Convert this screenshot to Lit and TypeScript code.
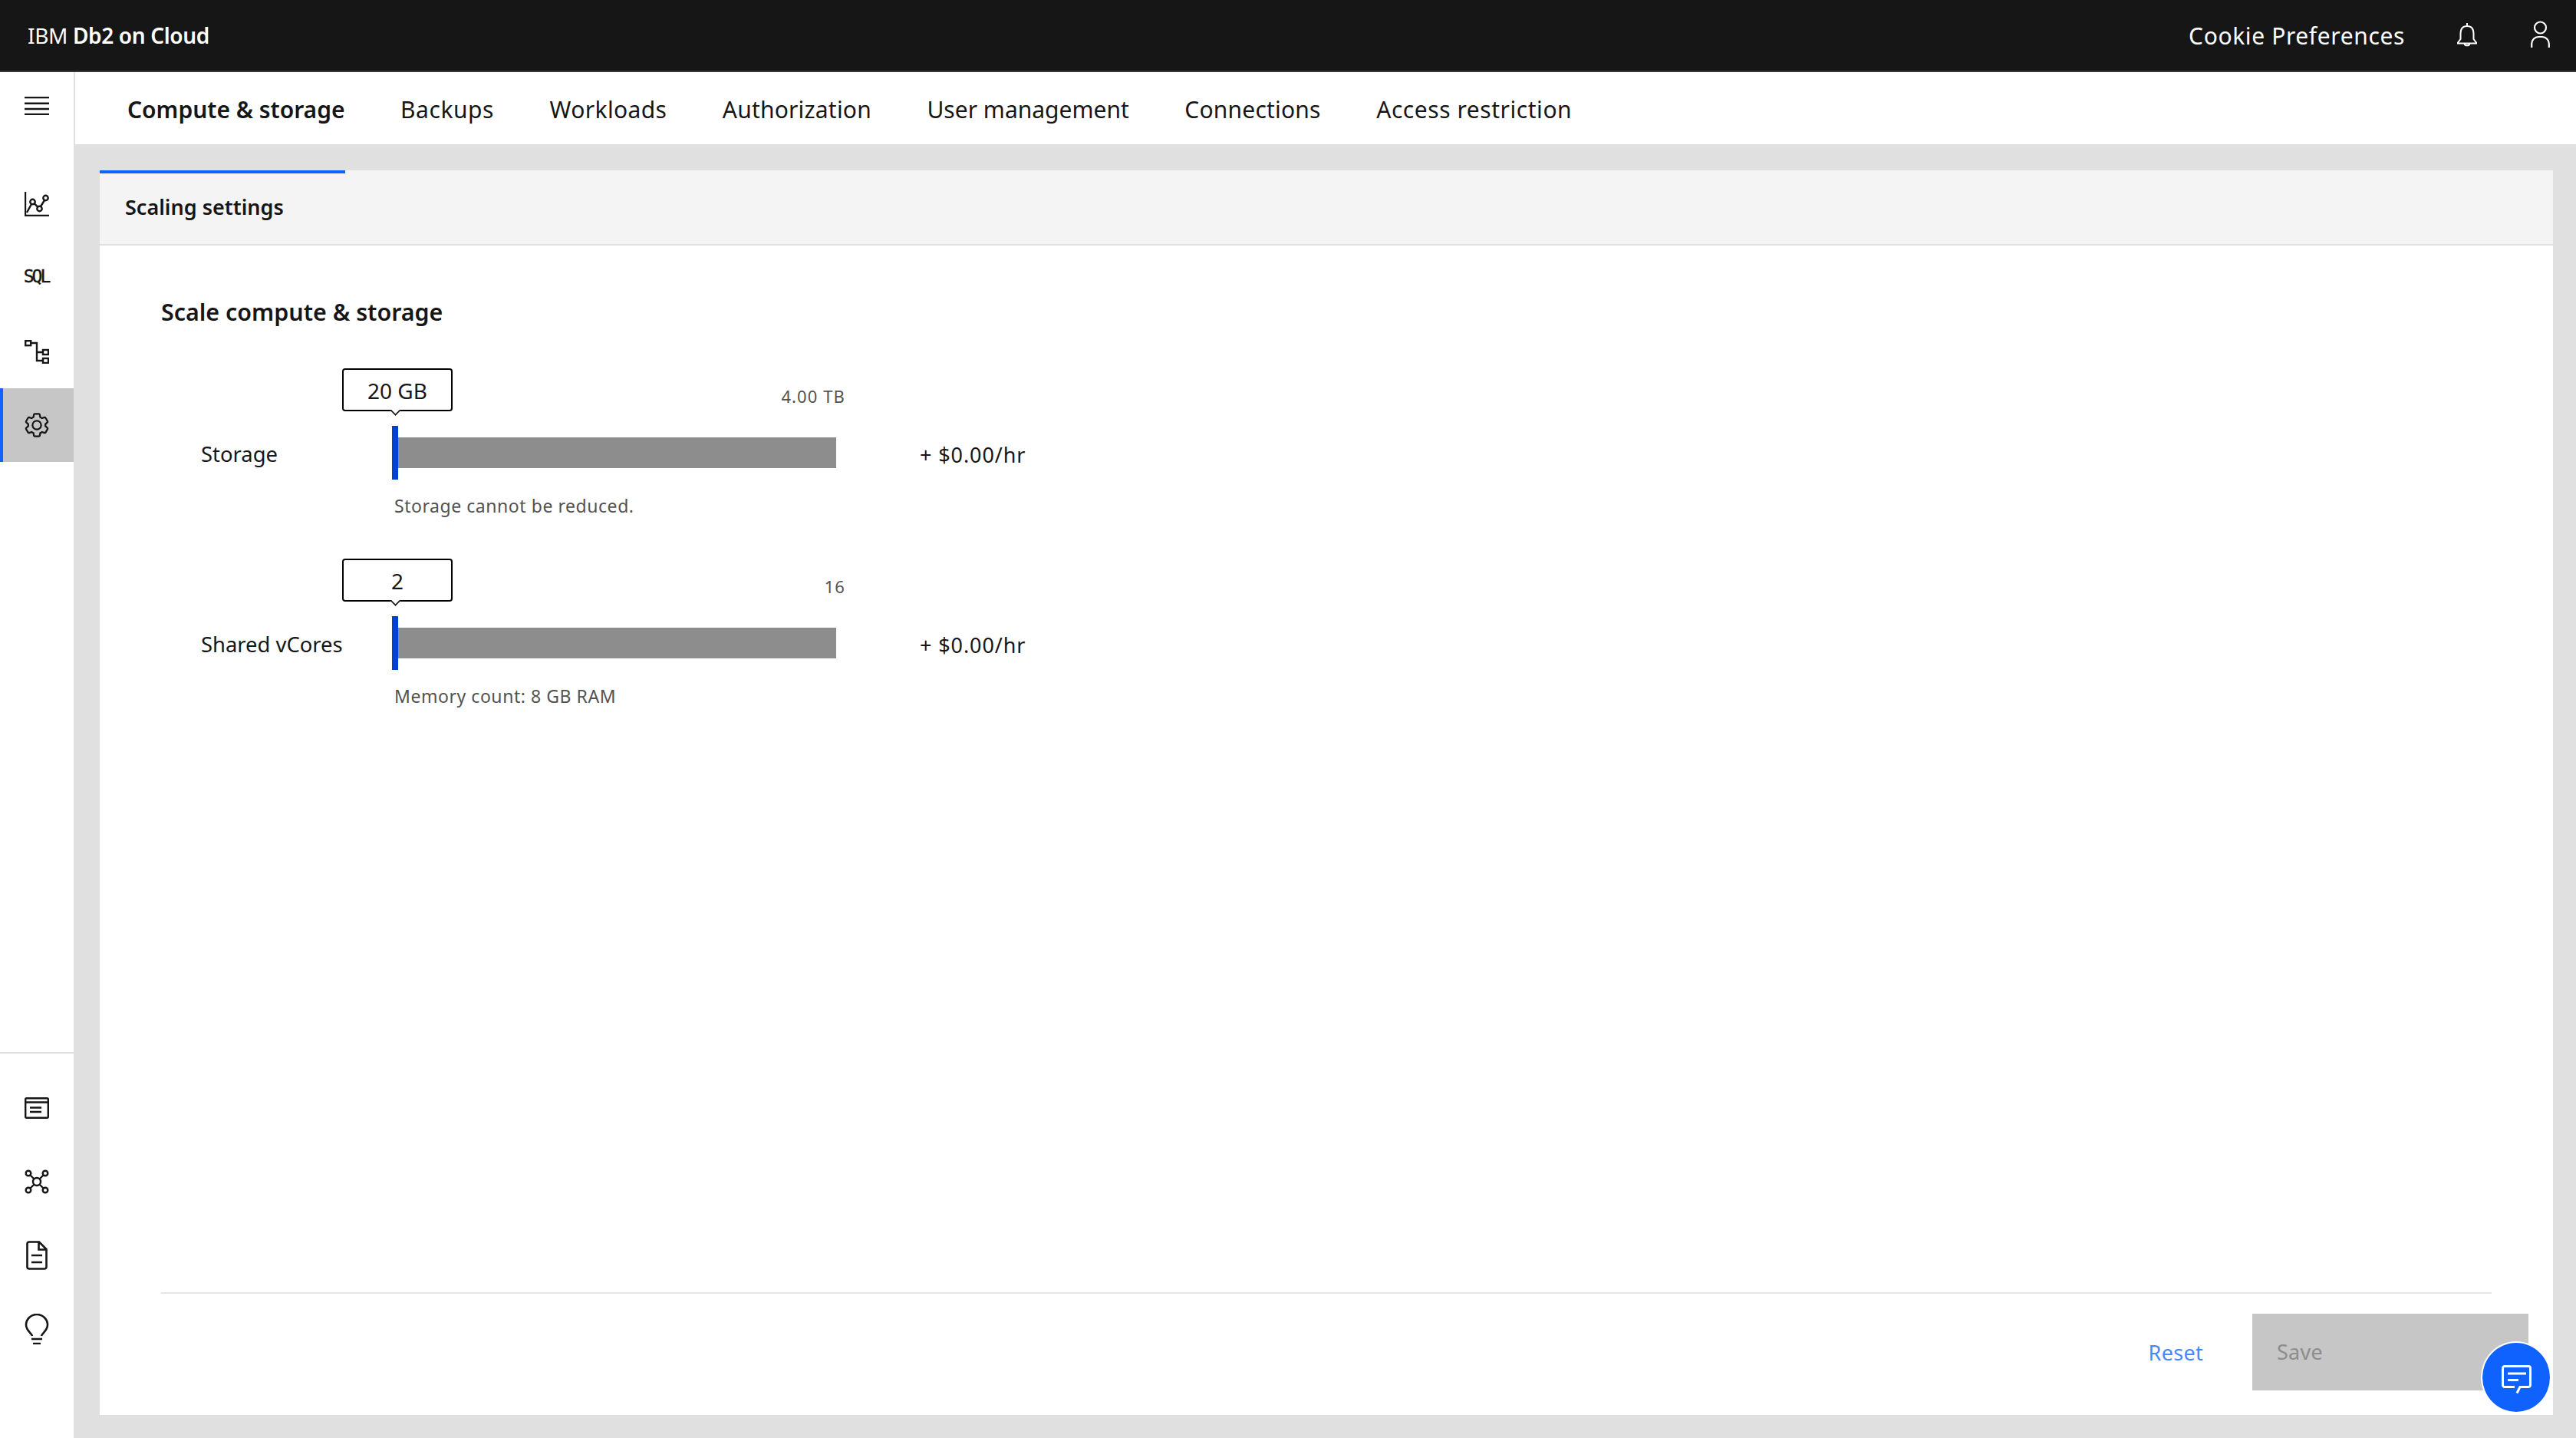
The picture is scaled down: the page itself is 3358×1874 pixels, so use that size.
import { LitElement, html, css, svg } from "lit";
import { customElement } from "lit/decorators.js";

const ic = (w: number, h: number, c: unknown, vb?: string) => html`<svg class="ic" width=${w} height=${h} viewBox=${vb ?? `0 0 ${w} ${h}`}>${c}</svg>`;

const gear = svg`<path fill="#161616" d="M27,16.76c0-.25,0-.5,0-.76s0-.51,0-.77l1.92-1.68A2,2,0,0,0,29.3,11L26.94,7a2,2,0,0,0-1.73-1,2,2,0,0,0-.64.1l-2.43.82a11.35,11.35,0,0,0-1.31-.75l-.51-2.52a2,2,0,0,0-2-1.61H13.64a2,2,0,0,0-2,1.61l-.51,2.52a11.48,11.48,0,0,0-1.32.75L7.43,6.06A2,2,0,0,0,6.79,6,2,2,0,0,0,5.06,7L2.7,11a2,2,0,0,0,.41,2.51L5,15.24c0,.25,0,.5,0,.76s0,.51,0,.77L3.11,18.45A2,2,0,0,0,2.7,21L5.06,25a2,2,0,0,0,1.73,1,2,2,0,0,0,.64-.1l2.43-.82a11.35,11.35,0,0,0,1.31.75l.51,2.52a2,2,0,0,0,2,1.61h4.72a2,2,0,0,0,2-1.61l.51-2.52a11.48,11.48,0,0,0,1.32-.75l2.42.82a2,2,0,0,0,.64.1,2,2,0,0,0,1.73-1L29.3,21a2,2,0,0,0-.41-2.51ZM25.21,24l-3.43-1.16a8.86,8.86,0,0,1-2.71,1.57L18.36,28H13.64l-.71-3.55a9.36,9.36,0,0,1-2.7-1.57L6.79,24,4.43,20l2.72-2.4a8.9,8.9,0,0,1,0-3.13L4.43,12,6.79,8l3.43,1.16a8.86,8.86,0,0,1,2.71-1.57L13.64,4h4.72l.71,3.55a9.36,9.36,0,0,1,2.7,1.57L25.21,8,27.57,12l-2.72,2.4a8.9,8.9,0,0,1,0,3.13L27.57,20Z"/><path fill="#161616" d="M16,22a6,6,0,1,1,6-6A5.94,5.94,0,0,1,16,22Zm0-10a3.91,3.91,0,0,0-4,4,3.91,3.91,0,0,0,4,4,3.91,3.91,0,0,0,4-4A3.91,3.91,0,0,0,16,12Z"/>`;

const S = `fill:none;stroke:#161616;stroke-width:2.4`;

const topIcons = [
  ic(32, 24, svg`<g style=${S}><path d="M0 1H32M0 8.7H32M0 16H32M0 23H32"/></g>`),
  ic(32, 32, svg`<g style=${S}><path d="M1 0V31H32" /><circle cx="10.5" cy="13" r="3.2"/><circle cx="19.5" cy="22" r="3.2"/><circle cx="27.5" cy="8" r="3.2"/><path d="M12.8 15.3L17.2 19.7M21 19L26 11M9 16L3 27"/></g>`),
  html`<span class="sql">SQL</span>`,
  ic(32, 32, svg`<g style=${S}><rect x="1.2" y="2.2" width="7" height="6"/><rect x="24" y="14" width="7" height="6"/><rect x="24" y="25" width="7" height="6"/><path d="M8 5H16V28H24M16 17H24"/></g>`),
];
const bottomIcons = [
  ic(32, 28, svg`<g style=${S}><rect x="1.2" y="1.2" width="29.6" height="25.6" rx="1.5"/><path d="M1 6.5H31M7 13.5H22M7 19H22"/></g>`),
  ic(32, 32, svg`<g style=${S}><circle cx="16" cy="16" r="5"/><circle cx="5" cy="5" r="3.3"/><circle cx="27" cy="5" r="3.3"/><circle cx="5" cy="27" r="3.3"/><circle cx="27" cy="27" r="3.3"/><path d="M7.5 7.5L12.5 12.5M24.5 7.5L19.5 12.5M7.5 24.5L12.5 19.5M24.5 24.5L19.5 19.5"/></g>`),
  ic(32, 38, svg`<g style="fill:none;stroke:#161616;stroke-width:2.6"><path d="M19 1.5H6A2.5 2.5 0 0 0 3.5 4V34A2.5 2.5 0 0 0 6 36.5H26A2.5 2.5 0 0 0 28.5 34V11ZM18.5 2V11.5H28"/><path d="M9 19H23M9 28H23"/></g>`),
  ic(32, 40, svg`<g style="fill:none;stroke:#161616;stroke-width:2.6"><path d="M10 29C9 25 2 22 2 14.5A14 13.5 0 0 1 30 14.5C30 22 23 25 22 29"/><path d="M9 33H23M11 39H21"/></g>`),
];

const bell = svg`<path d="M14 2V6M14 6C8 6 5.5 10 5.5 16V23L2 27.5V28.5H26V27.5L22.5 23V16C22.5 10 20 6 14 6ZM10.5 29C11 32 17 32 17.5 29" fill="none" stroke="#fff" stroke-width="2"/>`;
const user = svg`<circle cx="12.5" cy="9" r="7.5" fill="none" stroke="#fff" stroke-width="2.2"/><path d="M1.2 35V30A9 9 0 0 1 10 21H15A9 9 0 0 1 23.8 30V35" fill="none" stroke="#fff" stroke-width="2.2"/>`;
const chat = svg`<path d="M17 28.5H4A2.5 2.5 0 0 1 1.5 26V4A2.5 2.5 0 0 1 4 1.5H35A2.5 2.5 0 0 1 37.5 4V26A2.5 2.5 0 0 1 35 28.5H24L20 36.5" fill="none" stroke="#fff" stroke-width="3"/><path d="M8 11H32M8 19.5H22" fill="none" stroke="#fff" stroke-width="3"/>`;

const tabs = [
  { t: "Compute & storage", ls: -0.02 },
  { t: "Backups", ls: 0.57 },
  { t: "Workloads", ls: 0.37 },
  { t: "Authorization", ls: 0.2 },
  { t: "User management", ls: 0 },
  { t: "Connections", ls: 0.2 },
  { t: "Access restriction", ls: 0.55 },
];
const rows = [
  { label: "Storage", value: "20 GB", max: "4.00 TB", hint: "Storage cannot be reduced." },
  { label: "Shared vCores", value: "2", max: "16", hint: "Memory count: 8 GB RAM" },
];

@customElement("app-root")
export class AppRoot extends LitElement {
  static styles = css`
    :host {
      display: flex; flex-direction: column; height: 1874px; width: 3358px; overflow: hidden;
      font-family: "Noto Sans", sans-serif; color: #161616; background: #e0e0e0;
    }
    .ic { display: block; }
    .top {
      flex: none; height: 94px; box-sizing: border-box; border-bottom: 2px solid #393939; background: #161616; color: #fff;
      display: flex; align-items: center; padding: 0 34px 0 36px;
    }
    .brand { font-size: 28px; letter-spacing: -0.36px; }
    .brand b { font-weight: 600; }
    .right { margin-left: auto; display: flex; align-items: center; }
    .cookie { font-size: 30px; letter-spacing: 0.62px; margin-right: 67px; }
    .bell { margin-right: 69px; margin-top: -4px; }
    .user { margin-top: -2px; }
    .shell { flex: 1; display: flex; min-height: 0; }
    .side {
      flex: none; width: 96px; background: #fff; border-right: 2px solid #e0e0e0;
      display: flex; flex-direction: column;
    }
    .item { height: 96px; display: flex; align-items: center; justify-content: center; box-sizing: border-box; }
    .item.active { background: #c6c6c6; border-left: 4px solid #0f62fe; padding-right: 4px; }
    .sql {
      font-family: "DejaVu Sans Mono", monospace; font-size: 23px; letter-spacing: -3px; color: #161616;
      -webkit-text-stroke: 0.4px #161616; line-height: 24px; margin-left: -2px; margin-top: -4px;
    }
    .menu { height: 88px; margin-bottom: 36px; }
    .spacer { flex: 1; }
    .sidelow { border-top: 2px solid #e0e0e0; padding: 23px 0 94px; }
    .main { flex: 1; display: flex; flex-direction: column; min-width: 0; }
    .tabs { flex: none; height: 94px; background: #fff; display: flex; align-items: center; padding: 2px 0 0 68px; box-sizing: border-box; gap: 72.5px; }
    .tab { font-size: 30px; white-space: nowrap; }
    .tab.sel { font-weight: 600; }
    .area { flex: 1; padding: 34px 30px 30px 32px; display: flex; min-height: 0; }
    .panel { flex: 1; background: #fff; display: flex; flex-direction: column; position: relative; }
    .phead { flex: none; height: 98px; background: #f4f4f4; border-bottom: 2px solid #e0e0e0; box-sizing: border-box; }
    .bar { width: 320px; height: 4px; background: #0f62fe; }
    .ptitle { font-size: 27px; font-weight: 600; padding: 26px 0 0 33px; line-height: 36px; }
    .body { flex: 1; padding: 65px 80px 32px; display: flex; flex-direction: column; min-height: 0; }
    h2 { margin: 0 0 126px; font-size: 30.4px; font-weight: 600; line-height: 44px; }
    .row { display: flex; align-items: center; padding-left: 52px; height: 70px; }
    .group { margin-bottom: 130px; position: relative; }
    .lab { width: 252px; font-size: 27.4px; line-height: 36px; padding-top: 4px; white-space: nowrap; }
    .slider { width: 576px; height: 40px; background: #8d8d8d; position: relative; }
    .handle { position: absolute; left: -3px; top: -15px; width: 8px; height: 70px; background: #0043ce; }
    .tip {
      position: absolute; left: -68px; top: -90px; width: 144px; height: 56px; box-sizing: border-box;
      border: 2px solid #000; border-radius: 4px; background: #fff; font-size: 28px; line-height: 54px; text-align: center;
    }
    .tip::after {
      content: ""; position: absolute; left: 62px; bottom: -7px; width: 9px; height: 9px; background: #fff;
      border-right: 2px solid #161616; border-bottom: 2px solid #161616; transform: rotate(45deg) scale(0.8);
    }
    .max { position: absolute; right: -12px; top: -68px; font-size: 22px; line-height: 28px; color: #525252; white-space: nowrap; letter-spacing: 1.1px; }
    .price { margin-left: 109px; font-size: 27px; padding-top: 4px; white-space: nowrap; letter-spacing: 0.9px; }
    .hint { padding: 20px 0 0 304px; font-size: 23px; line-height: 28px; color: #525252; letter-spacing: 0.55px; white-space: nowrap; }
    .foot { margin-top: auto; border-top: 2px solid #e6e6e6; }
    .actions { margin-right: -48px; padding-top: 26px; display: flex; justify-content: flex-end; align-items: stretch; }
    .reset { font-size: 27px; color: #4589ff; align-self: center; margin-right: 64px; letter-spacing: 0.3px; }
    .save {
      width: 360px; height: 100px; box-sizing: border-box; background: #c6c6c6; color: #8d8d8d; font-size: 27px;
      padding: 31px 0 0 32px; line-height: 38px; letter-spacing: 0.3px;
    }
    .fab {
      position: absolute; right: 2px; bottom: 2px; width: 92px; height: 94px; border-radius: 50%; background: #0f62fe;
      border: 2px solid #fff; box-sizing: border-box; display: flex; align-items: center; justify-content: center; padding-top: 6px;
    }
  `;

  render() {
    return html`
      <div class="top">
        <div class="brand">IBM <b>Db2 on Cloud</b></div>
        <div class="right">
          <span class="cookie">Cookie Preferences</span>
          <span class="bell">${ic(28, 33, bell)}</span>
          <span class="user">${ic(25, 36, user)}</span>
        </div>
      </div>
      <div class="shell">
        <nav class="side">
          <div class="item menu">${topIcons[0]}</div>
          <div class="item">${topIcons[1]}</div>
          <div class="item">${topIcons[2]}</div>
          <div class="item">${topIcons[3]}</div>
          <div class="item active">${ic(36, 36, gear, "0 0 32 32")}</div>
          <div class="spacer"></div>
          <div class="sidelow">
            ${bottomIcons.map((i) => html`<div class="item">${i}</div>`)}
          </div>
        </nav>
        <div class="main">
          <div class="tabs">
            ${tabs.map((t, i) => html`<span class="tab ${i === 0 ? "sel" : ""}" style="letter-spacing:${t.ls}px">${t.t}</span>`)}
          </div>
          <div class="area">
            <section class="panel">
              <div class="phead"><div class="bar"></div><div class="ptitle">Scaling settings</div></div>
              <div class="body">
                <h2>Scale compute &amp; storage</h2>
                ${rows.map((r) => html`
                  <div class="group">
                    <div class="row">
                      <span class="lab">${r.label}</span>
                      <div class="slider">
                        <div class="handle"></div>
                        <div class="tip">${r.value}</div>
                        <span class="max">${r.max}</span>
                      </div>
                      <span class="price">+ $0.00/hr</span>
                    </div>
                    <div class="hint">${r.hint}</div>
                  </div>`)}
                <div class="foot">
                  <div class="actions">
                    <span class="reset">Reset</span>
                    <div class="save">Save</div>
                  </div>
                </div>
              </div>
              <div class="fab">${ic(39, 38, chat)}</div>
            </section>
          </div>
        </div>
      </div>
    `;
  }
}
